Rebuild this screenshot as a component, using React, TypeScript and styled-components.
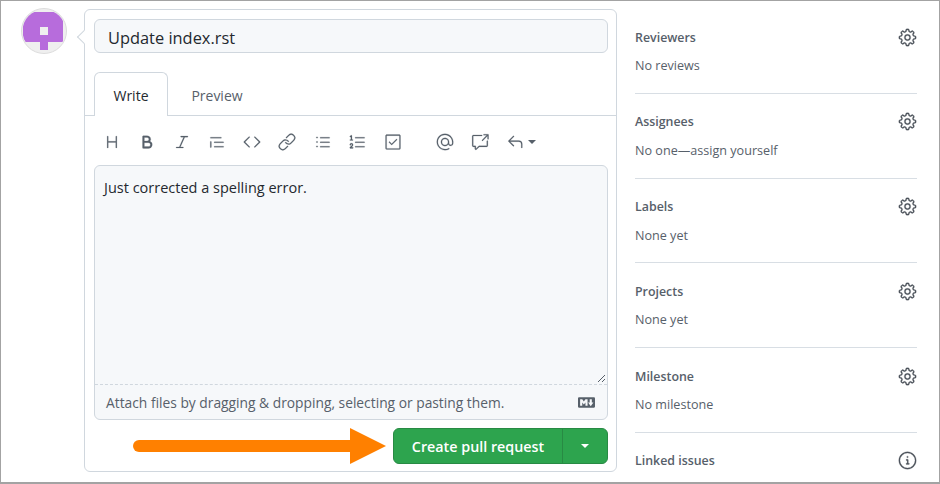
import React from "react";
import styled, { createGlobalStyle } from "styled-components";
import {
  GoBold,
  GoCheckbox,
  GoCode,
  GoCrossReference,
  GoGear,
  GoHeading,
  GoInfo,
  GoItalic,
  GoLink,
  GoListOrdered,
  GoListUnordered,
  GoMention,
  GoQuote,
  GoReply,
} from "react-icons/go";

const GlobalStyle = createGlobalStyle`
  html, body {
    margin: 0;
    padding: 0;
    background: #fff;
  }
  body {
    font-family: "Open Sans", "Noto Sans", "Liberation Sans", sans-serif;
    color: #24292f;
  }
`;

const Frame = styled.div`
  width: 940px;
  height: 484px;
  box-sizing: border-box;
  border: 1px solid #a3a3a3;
  border-width: 1px 1px 2px 1px;
  overflow: hidden;
  display: flex;
  align-items: flex-start;
  padding: 8px 0 0 20px;
`;

const Avatar = styled.svg`
  width: 46px;
  height: 46px;
  flex: none;
  margin-top: -1px;
`;

const Card = styled.div`
  position: relative;
  width: 533px;
  height: 463px;
  margin-left: 17px;
  box-sizing: border-box;
  border: 1px solid #d0d7de;
  border-radius: 6px;
  padding: 9px 8px 0 9px;

  &::before {
    content: "";
    position: absolute;
    left: -6px;
    top: 22px;
    width: 9px;
    height: 9px;
    background: #fff;
    border-left: 1px solid #d0d7de;
    border-bottom: 1px solid #d0d7de;
    transform: rotate(45deg);
  }
`;

const TitleInput = styled.div`
  height: 34px;
  box-sizing: border-box;
  border: 1px solid #d0d7de;
  border-radius: 6px;
  background: #f6f8fa;
  padding-left: 13px;
  font-size: 16.4px;
  line-height: 35px;
  color: #24292f;
`;

const Tabs = styled.div`
  display: flex;
  height: 43px;
  margin: 19px -8px 0 -9px;
  padding-left: 9px;
  border-bottom: 1px solid #d0d7de;
`;

const Tab = styled.div<{ $active?: boolean }>`
  width: 74px;
  box-sizing: border-box;
  height: ${(p) => (p.$active ? "44px" : "43px")};
  text-align: center;
  font-size: 14px;
  line-height: 46px;
  color: ${(p) => (p.$active ? "#24292f" : "#57606a")};
  background: #fff;
  border: 1px solid ${(p) => (p.$active ? "#d0d7de" : "transparent")};
  border-bottom: 0;
  border-radius: 6px 6px 0 0;
  margin-right: 12px;
`;

const Toolbar = styled.div`
  display: flex;
  align-items: center;
  height: 49px;
  padding: 3px 0 0 9px;
  box-sizing: border-box;
  color: #57606a;

  svg {
    stroke: currentColor;
    stroke-width: 0.25;
  }
`;

const ToolButton = styled.span<{ $gapAfter?: number }>`
  width: 18px;
  height: 18px;
  display: flex;
  margin-right: ${(p) => p.$gapAfter ?? 17.1}px;
`;

const Caret = styled.span`
  width: 0;
  height: 0;
  margin-left: 4px;
  border: 4px solid transparent;
  border-top-color: currentColor;
  border-bottom: 0;
`;

const Editor = styled.div`
  height: 255px;
  box-sizing: border-box;
  border: 1px solid #d0d7de;
  border-radius: 6px;
  background: #f6f8fa;
  display: flex;
  flex-direction: column;
`;

const EditorText = styled.div`
  position: relative;
  flex: 1;
  padding: 11px 9px;
  font-size: 14.5px;
  line-height: 21px;
  color: #24292f;
`;

const ResizeGrip = styled.svg`
  position: absolute;
  right: 1px;
  bottom: 1px;
  width: 9px;
  height: 9px;
`;

const AttachBar = styled.div`
  height: 35px;
  flex: none;
  box-sizing: border-box;
  border-top: 1px dashed #d0d7de;
  padding: 0 12px 0 11px;
  display: flex;
  align-items: center;
  justify-content: space-between;
  font-size: 13.8px;
  color: #57606a;
`;

const MarkdownMark = styled.svg`
  width: 17px;
  height: 17px;
  fill: #57606a;
`;

const ActionRow = styled.div`
  display: flex;
  justify-content: flex-end;
  margin-top: 8px;
`;

const SplitButton = styled.div`
  display: flex;
  height: 36px;
  width: 215px;
  box-sizing: border-box;
  border: 1px solid #288a44;
  border-radius: 6px;
  background: #2da44e;
  color: #fff;
  font-size: 14.3px;
  font-weight: 600;
`;

const ButtonLabel = styled.div`
  width: 168px;
  text-align: center;
  line-height: 36px;
  border-right: 1px solid #288a44;
`;

const ButtonCaret = styled.div`
  flex: 1;
  display: flex;
  align-items: center;
  justify-content: center;

  &::after {
    content: "";
    border: 4px solid transparent;
    border-top-color: #fff;
    border-bottom: 0;
  }
`;

const ArrowOverlay = styled.svg`
  position: absolute;
  left: 48px;
  top: 418px;
  width: 254px;
  height: 36px;
`;

const Sidebar = styled.div`
  width: 282px;
  margin-left: 18px;
  flex: none;
`;

const Section = styled.div`
  height: 84.8px;
  box-sizing: border-box;
  padding-top: 18px;
  border-bottom: 1px solid #d8dee4;

  &:last-child {
    border-bottom: 0;
  }
`;

const SectionHead = styled.div`
  display: flex;
  align-items: center;
  justify-content: space-between;
  height: 20px;
  font-size: 12.4px;
  font-weight: 600;
  color: #57606a;
`;

const HeadIcon = styled.span`
  display: flex;
  color: #4d545c;

  svg {
    stroke: currentColor;
    stroke-width: 0.3;
  }
`;

const SectionBody = styled.div`
  margin-top: 10px;
  font-size: 12.6px;
  line-height: 18px;
  color: #57606a;
`;

const tools = [
  { Icon: GoHeading },
  { Icon: GoBold },
  { Icon: GoItalic },
  { Icon: GoQuote },
  { Icon: GoCode },
  { Icon: GoLink },
  { Icon: GoListUnordered },
  { Icon: GoListOrdered },
  { Icon: GoCheckbox, gap: 34 },
  { Icon: GoMention },
  { Icon: GoCrossReference },
  { Icon: GoReply, gap: 0 },
];

const sections = [
  { title: "Reviewers", body: "No reviews" },
  { title: "Assignees", body: "No one—assign yourself" },
  { title: "Labels", body: "None yet" },
  { title: "Projects", body: "None yet" },
  { title: "Milestone", body: "No milestone" },
];

export default function App() {
  return (
    <>
      <GlobalStyle />
      <Frame>
        <Avatar viewBox="0 0 46 46">
          <defs>
            <clipPath id="avatar-clip">
              <circle cx="23" cy="23" r="21.5" />
            </clipPath>
          </defs>
          <circle cx="23" cy="23" r="22.5" fill="#efefef" stroke="#dcdcdc" />
          <g clipPath="url(#avatar-clip)">
            <rect x="2" y="4" width="40" height="30" fill="#b76cdc" />
            <rect x="19" y="34" width="8" height="8" fill="#b76cdc" />
            <rect x="19" y="19" width="8" height="8" fill="#efefef" />
          </g>
        </Avatar>
        <Card>
          <TitleInput>Update index.rst</TitleInput>
          <Tabs>
            <Tab $active>Write</Tab>
            <Tab>Preview</Tab>
          </Tabs>
          <Toolbar>
            {tools.map(({ Icon, gap }, i) => (
              <ToolButton key={i} $gapAfter={gap}>
                <Icon size={18} />
              </ToolButton>
            ))}
            <Caret />
          </Toolbar>
          <Editor>
            <EditorText>
              Just corrected a spelling error.
              <ResizeGrip viewBox="0 0 9 9">
                <path d="M1 8 8 1M5 8 8 5" stroke="#57606a" fill="none" />
              </ResizeGrip>
            </EditorText>
            <AttachBar>
              <span>Attach files by dragging &amp; dropping, selecting or pasting them.</span>
              <MarkdownMark viewBox="0 0 16 16">
                <path d="M14.85 3c.63 0 1.15.52 1.14 1.15v7.7c0 .63-.51 1.15-1.15 1.15H1.15C.52 13 0 12.48 0 11.84V4.15C0 3.52.52 3 1.15 3ZM9 11V5H7L5.5 7 4 5H2v6h2V8l1.5 1.92L7 8v3Zm2.99.5L14.5 8H13V5h-2v3H9.5Z" />
              </MarkdownMark>
            </AttachBar>
          </Editor>
          <ActionRow>
            <SplitButton>
              <ButtonLabel>Create pull request</ButtonLabel>
              <ButtonCaret />
            </SplitButton>
          </ActionRow>
          <ArrowOverlay viewBox="0 0 254 36">
            <path d="M6 18H220" stroke="#ff8000" strokeWidth="12" strokeLinecap="round" />
            <path d="M217 0 253 18 217 36Z" fill="#ff8000" />
          </ArrowOverlay>
        </Card>
        <Sidebar>
          {sections.map((s) => (
            <Section key={s.title}>
              <SectionHead>
                {s.title}
                <HeadIcon>
                  <GoGear size={19} />
                </HeadIcon>
              </SectionHead>
              <SectionBody>{s.body}</SectionBody>
            </Section>
          ))}
          <Section>
            <SectionHead>
              Linked issues
              <HeadIcon>
                <GoInfo size={19} />
              </HeadIcon>
            </SectionHead>
          </Section>
        </Sidebar>
      </Frame>
    </>
  );
}
